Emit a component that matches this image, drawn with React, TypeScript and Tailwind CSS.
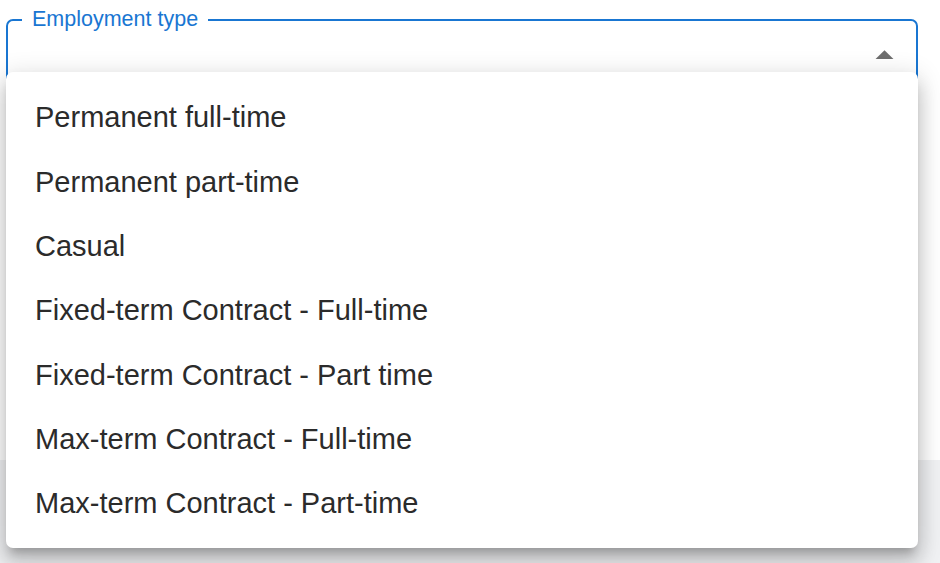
import React from "react";

const OPTIONS = [
  "Permanent full-time",
  "Permanent part-time",
  "Casual",
  "Fixed-term Contract - Full-time",
  "Fixed-term Contract - Part time",
  "Max-term Contract - Full-time",
  "Max-term Contract - Part-time",
];

const SelectField = () => {
  return (
    <div className="relative ml-[6px] mt-[18px] h-[100px] w-[912px] rounded-[7px] border-2 border-[#1976d2]">
      <span className="absolute left-[14px] top-[-14.4px] bg-white px-[10px] text-[21.5px] leading-[24px] text-[#1976d2]">
        Employment type
      </span>
      <svg
        className="absolute right-[10px] top-[13px]"
        width="43"
        height="43"
        viewBox="0 0 24 24"
        fill="#6e6e6e"
      >
        <path d="M7 14l5-5 5 5z" />
      </svg>
    </div>
  );
};

const Menu = () => {
  return (
    <ul className="absolute left-[6px] top-[72px] w-[912px] rounded-[7px] bg-white pt-[14px] pb-[12px] shadow-[0_9px_9px_-5px_rgba(0,0,0,0.2),0_14px_18px_2px_rgba(0,0,0,0.14),0_5px_25px_4px_rgba(0,0,0,0.12)]">
      {OPTIONS.map((label) => (
        <li
          key={label}
          className="flex h-[64.3px] items-center px-[29px] text-[29px] text-[#2b2b2b]"
        >
          {label}
        </li>
      ))}
    </ul>
  );
};

export default function App() {
  return (
    <div className="relative flex h-[563px] w-[940px] flex-col overflow-hidden bg-white font-['Liberation_Sans',Arial,sans-serif]">
      <div className="h-[460px] pt-px">
        <SelectField />
      </div>
      <div className="flex-1 bg-[#f0f1f3]" />
      <Menu />
    </div>
  );
}
